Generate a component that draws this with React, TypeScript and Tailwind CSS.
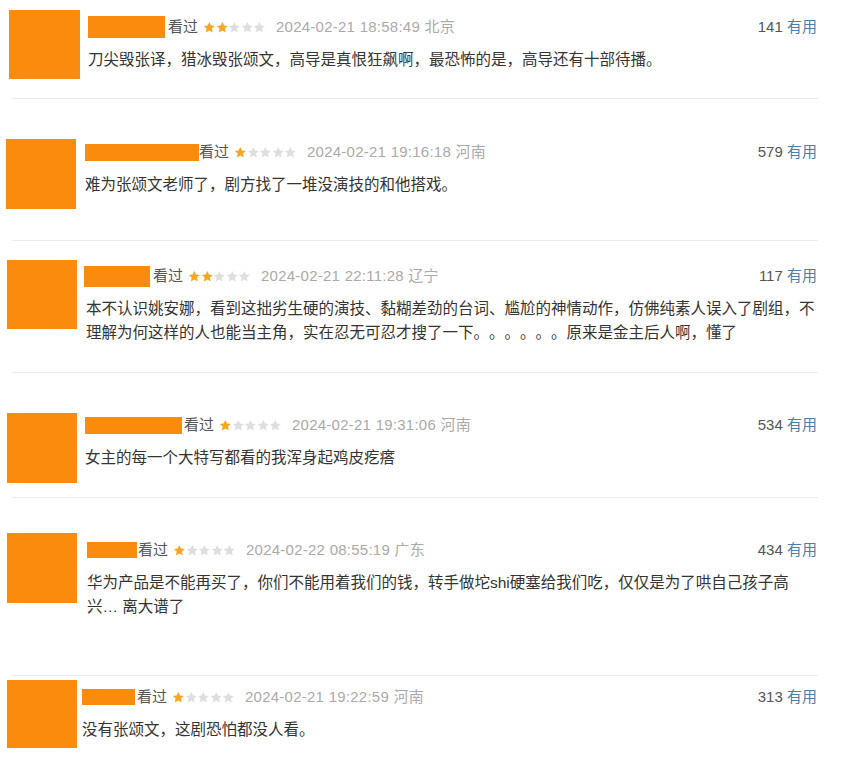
import React from "react";

type Comment = {
  wrap: string;
  avatar: string;
  content: string;
  name: string;
  body: string;
  rating: number;
  time: string;
  place: string;
  votes: number;
  text: string;
  divider: boolean;
};

const comments: Comment[] = [
  {
    wrap: "h-[98px] pt-[10px] pl-[9px]",
    avatar: "w-[71px] h-[69px]",
    content: "ml-[8px] pt-[5px]",
    name: "w-[77px] h-[22px] mr-[3px]",
    body: "mr-0",
    rating: 2,
    time: "2024-02-21 18:58:49",
    place: "北京",
    votes: 141,
    text: "刀尖毁张译，猎冰毁张颂文，高导是真恨狂飙啊，最恐怖的是，高导还有十部待播。",
    divider: true,
  },
  {
    wrap: "h-[141px] pt-[40px] pl-[6px]",
    avatar: "w-[70px] h-[70px]",
    content: "ml-[9px] pt-[1px]",
    name: "w-[114px] h-[17px] mr-0",
    body: "mr-0",
    rating: 1,
    time: "2024-02-21 19:16:18",
    place: "河南",
    votes: 579,
    text: "难为张颂文老师了，剧方找了一堆没演技的和他搭戏。",
    divider: true,
  },
  {
    wrap: "h-[131px] pt-[19px] pl-[7px]",
    avatar: "w-[70px] h-[69px]",
    content: "ml-[7px] pt-[4px]",
    name: "w-[66px] h-[21px] mr-[3px]",
    body: "-mr-[4px] pl-[2px]",
    rating: 2,
    time: "2024-02-21 22:11:28",
    place: "辽宁",
    votes: 117,
    text: "本不认识姚安娜，看到这拙劣生硬的演技、黏糊差劲的台词、尴尬的神情动作，仿佛纯素人误入了剧组，不理解为何这样的人也能当主角，实在忍无可忍才搜了一下。。。。。。原来是金主后人啊，懂了",
    divider: true,
  },
  {
    wrap: "h-[124px] pt-[40px] pl-[7px]",
    avatar: "w-[70px] h-[70px]",
    content: "ml-[8px] pt-0",
    name: "w-[97px] h-[17px] mr-[2px]",
    body: "mr-0",
    rating: 1,
    time: "2024-02-21 19:31:06",
    place: "河南",
    votes: 534,
    text: "女主的每一个大特写都看的我浑身起鸡皮疙瘩",
    divider: true,
  },
  {
    wrap: "h-[177px] pt-[35px] pl-[7px]",
    avatar: "w-[70px] h-[70px]",
    content: "ml-[10px] pt-[5px]",
    name: "w-[50px] h-[16px] mr-[1px]",
    body: "mr-[10px]",
    rating: 1,
    time: "2024-02-22 08:55:19",
    place: "广东",
    votes: 434,
    text: "华为产品是不能再买了，你们不能用着我们的钱，转手做坨shi硬塞给我们吃，仅仅是为了哄自己孩子高兴… 离大谱了",
    divider: true,
  },
  {
    wrap: "h-[85px] pt-[4px] pl-[7px]",
    avatar: "w-[70px] h-[68px]",
    content: "ml-[5px] pt-[5px]",
    name: "w-[53px] h-[16px] mr-[2px]",
    body: "mr-0",
    rating: 1,
    time: "2024-02-21 19:22:59",
    place: "河南",
    votes: 313,
    text: "没有张颂文，这剧恐怕都没人看。",
    divider: false,
  },
];

function Star({ on }: { on: boolean }) {
  return (
    <svg viewBox="0 0 24 24" className="h-[13px] w-[12.6px]">
      <path
        d="M12 1.5l3.2 6.7 7.3.9-5.4 5 1.4 7.3L12 17.8l-6.5 3.6 1.4-7.3-5.4-5 7.3-.9z"
        fill={on ? "#f5a623" : "#dedede"}
      />
    </svg>
  );
}

function Stars({ value }: { value: number }) {
  return (
    <span className="ml-[5px] mr-[10px] flex items-center">
      {[1, 2, 3, 4, 5].map((i) => (
        <Star key={i} on={i <= value} />
      ))}
    </span>
  );
}

function CommentItem({ c }: { c: Comment }) {
  return (
    <>
      <div className={`flex w-[817px] items-start ${c.wrap}`}>
        <div className={`shrink-0 bg-[#fa8b0c] ${c.avatar}`} />
        <div className={`min-w-0 flex-1 ${c.content}`}>
          <div className="flex h-[24px] items-center text-[15px] leading-[24px]">
            <span className={`shrink-0 bg-[#fa8b0c] ${c.name}`} />
            <span className="text-[#555]">看过</span>
            <Stars value={c.rating} />
            <span className="tracking-[0.25px] text-[#aaa]">
              {c.time} {c.place}
            </span>
            <span className="ml-auto text-[#555]">
              {c.votes} <span className="text-[#4a7fab]">有用</span>
            </span>
          </div>
          <p
            className={`mt-[9px] text-[15.5px] leading-[24px] text-[#333] [text-spacing-trim:space-all] ${c.body}`}
          >
            {c.text}
          </p>
        </div>
      </div>
      {c.divider && <div className="ml-[12px] h-px w-[806px] bg-[#ececec]" />}
    </>
  );
}

export default function App() {
  return (
    <div
      className="h-[761px] w-[865px] overflow-hidden bg-white"
      style={{ fontFamily: '"Liberation Sans", "Noto Sans CJK SC", sans-serif' }}
    >
      {comments.map((c, i) => (
        <CommentItem key={i} c={c} />
      ))}
    </div>
  );
}
